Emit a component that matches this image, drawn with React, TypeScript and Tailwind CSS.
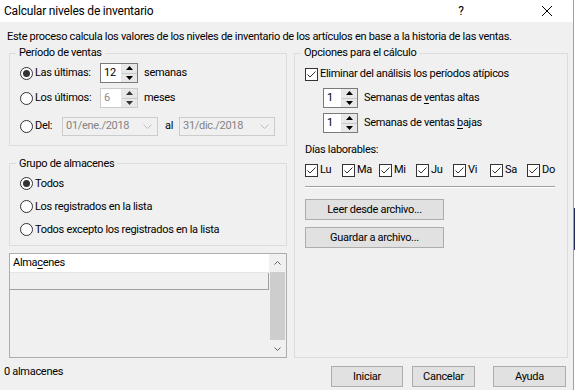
import React from 'react';

function Radio({ checked, label }: { checked?: boolean; label: React.ReactNode }) {
  return (
    <div className="flex items-center h-[16px] whitespace-nowrap">
      <span className="w-[13px] h-[13px] rounded-full border border-[#333333] bg-white flex items-center justify-center shrink-0">
        {checked && <span className="w-[7px] h-[7px] rounded-full bg-[#333333]" />}
      </span>
      <span className="ml-[2px]">{label}</span>
    </div>
  );
}

function Check({ label }: { label: React.ReactNode }) {
  return (
    <div className="flex items-center h-[16px] whitespace-nowrap">
      <span className="w-[13px] h-[13px] border border-[#333333] bg-white flex items-center justify-center shrink-0">
        <svg viewBox="0 0 11 11" className="w-[11px] h-[11px]" fill="none" stroke="#333333" strokeWidth="1">
          <path d="M1.5 5.5 L4 8 L9.5 2.5" />
        </svg>
      </span>
      <span className="ml-[2px]">{label}</span>
    </div>
  );
}

function Spin({ value, disabled, w }: { value: string; disabled?: boolean; w: string }) {
  const border = disabled ? 'border-[#cccccc]' : 'border-[#7a7a7a]';
  const tri = disabled ? '#333333' : '#000000';
  return (
    <div className={`flex h-[20px] border bg-white shrink-0 ${border} ${w}`}>
      <div className={`flex-1 pl-[3px] leading-[18px] ${disabled ? 'text-[#8a8a8a]' : 'text-black'}`}>{value}</div>
      <div className="w-[16px] flex flex-col border-l border-[#e3e3e3] bg-[#f0f0f0]">
        <div className="flex-1 flex items-center justify-center border-b border-[#c8c8c8] bg-[#e8e8e8]">
          <svg viewBox="0 0 7 4" className="w-[7px] h-[4px]"><path d="M3.5 0 L7 4 L0 4 Z" fill={tri} /></svg>
        </div>
        <div className="flex-1 flex items-center justify-center bg-[#e8e8e8]">
          <svg viewBox="0 0 7 4" className="w-[7px] h-[4px]"><path d="M0 0 L7 0 L3.5 4 Z" fill={tri} /></svg>
        </div>
      </div>
    </div>
  );
}

function Combo({ value }: { value: string }) {
  return (
    <div className="flex items-center h-[19px] w-[96px] border border-[#cccccc] bg-[#f0f0f0] text-[#838383] shrink-0">
      <span className="flex-1 pl-[3px]">{value}</span>
      <svg viewBox="0 0 9 5" className="w-[9px] h-[5px] mr-[5px]" fill="none" stroke="#bfbfbf" strokeWidth="1">
        <path d="M0.5 0.5 L4.5 4.5 L8.5 0.5" />
      </svg>
    </div>
  );
}

function Btn({ label, w }: { label: string; w: string }) {
  return (
    <div className={`h-[21px] border border-[#adadad] bg-[#e1e1e1] flex items-center justify-center whitespace-nowrap ${w}`}>
      {label}
    </div>
  );
}

function Group({ title, className, children }: { title: string; className?: string; children: React.ReactNode }) {
  return (
    <fieldset className={`border border-[#dcdcdc] ${className ?? ''}`}>
      <legend className="ml-[6px] px-[3px] leading-[16px]">{title}</legend>
      <div className="pl-[10px]">{children}</div>
    </fieldset>
  );
}

export default function App() {
  return (
    <div className="flex bg-white font-['Roboto',sans-serif] text-[11px] tracking-[-0.3px] text-black leading-[16px] w-[576px] h-[390px] overflow-hidden">
      <div className="w-[574px] h-[390px] flex flex-col border-r border-[#a0a0a0]">
        {/* Title bar */}
        <div className="h-[22px] bg-white flex items-center shrink-0 text-[12px] tracking-[-0.2px]">
          <span className="ml-[4px] flex-1">Calcular niveles de inventario</span>
          <span className="w-[10px] text-center mr-[76px]">?</span>
          <svg viewBox="0 0 10 10" className="w-[10px] h-[10px] mr-[21px]" stroke="#000" strokeWidth="1">
            <path d="M0 0 L10 10 M10 0 L0 10" />
          </svg>
        </div>

        {/* Body */}
        <div className="flex-1 bg-[#f0f0f0] pl-[4px] pt-[7px]">
          <div className="pl-[3px] whitespace-nowrap">Este proceso calcula los valores de los niveles de inventario de los artículos en base a la historia de las ventas.</div>

          <div className="flex ml-[5px] gap-[7px] h-[313px]">
            {/* Left column */}
            <div className="w-[278px] flex flex-col">
              <Group title="Período de ventas" className="h-[101px]">
                <div className="flex items-center h-[20px] mt-[2px]">
                  <div className="w-[80px]"><Radio checked label="Las últimas:" /></div>
                  <Spin value="12" w="w-[38px]" />
                  <span className="ml-[6px]">semanas</span>
                </div>
                <div className="flex items-center h-[20px] mt-[5px]">
                  <div className="w-[80px]"><Radio label="Los últimos:" /></div>
                  <Spin value="6" disabled w="w-[38px]" />
                  <span className="ml-[6px]">meses</span>
                </div>
                <div className="flex items-center h-[20px] mt-[8px]">
                  <div className="w-[42px]"><Radio label="Del:" /></div>
                  <Combo value="01/ene./2018" />
                  <span className="ml-[7px] w-[14px]">al</span>
                  <Combo value="31/dic./2018" />
                </div>
              </Group>

              <Group title="Grupo de almacenes" className="h-[91px] mt-[10px]">
                <div className="mt-[4px]"><Radio checked label="Todos" /></div>
                <div className="mt-[7px]"><Radio label="Los registrados en la lista" /></div>
                <div className="mt-[7px]"><Radio label="Todos excepto los registrados en la lista" /></div>
              </Group>

              <div className="mt-[7px] h-[105px] border border-[#adadad] bg-[#f0f0f0] flex">
                <div className="flex-1 flex flex-col">
                  <div className="h-[19px] bg-white pl-[3px] leading-[18px] border-b border-[#e5e5e5]">
                    Alma<span className="underline underline-offset-2">c</span>enes
                  </div>
                  <div className="h-[17px] border-b border-r border-[#a0a0a0] bg-[#f0f0f0]" />
                </div>
                <div className="w-[17px] flex flex-col bg-[#f0f0f0]">
                  <div className="h-[18px] flex items-center justify-center">
                    <svg viewBox="0 0 7 4" className="w-[7px] h-[4px]" fill="none" stroke="#606060" strokeWidth="1">
                      <path d="M0.5 3.5 L3.5 0.5 L6.5 3.5" />
                    </svg>
                  </div>
                  <div className="h-[68px] mx-[1px] bg-[#cdcdcd]" />
                  <div className="flex-1 flex items-center justify-center">
                    <svg viewBox="0 0 7 4" className="w-[7px] h-[4px]" fill="none" stroke="#606060" strokeWidth="1">
                      <path d="M0.5 0.5 L3.5 3.5 L6.5 0.5" />
                    </svg>
                  </div>
                </div>
              </div>
            </div>

            {/* Right column */}
            <Group title="Opciones para el cálculo" className="w-[274px] h-[313px]">
              <div className="mt-[5px]">
                <Check label="Eliminar del análisis los períodos atípicos" />
              </div>
              <div className="flex items-center mt-[6px] ml-[18px]">
                <Spin value="1" w="w-[35px]" />
                <span className="ml-[6px]">Semanas de <span className="underline underline-offset-2">v</span>entas altas</span>
              </div>
              <div className="flex items-center mt-[5px] ml-[18px]">
                <Spin value="1" w="w-[35px]" />
                <span className="ml-[6px]">Semanas de ventas <span className="underline underline-offset-2">b</span>ajas</span>
              </div>
              <div className="mt-[9px]">Días laborables:</div>
              <div className="flex mt-[4px]">
                {['Lu', 'Ma', 'Mi', 'Ju', 'Vi', 'Sa', 'Do'].map(d => (
                  <div key={d} className="w-[37px]"><Check label={d} /></div>
                ))}
              </div>
              <div className="mt-[8px] mr-[12px] h-[2px] border-t border-[#a0a0a0] border-b border-b-white" />
              <div className="mt-[11px]"><Btn label="Leer desde archivo..." w="w-[139px]" /></div>
              <div className="mt-[7px]"><Btn label="Guardar a archivo..." w="w-[139px]" /></div>
            </Group>
          </div>

          {/* Bottom row */}
          <div className="flex">
            <div className="mt-[6px] flex-1">0 almacenes</div>
            <div className="flex mt-[8px] mr-[7px]">
              <Btn label="Iniciar" w="w-[72px]" />
              <div className="ml-[9px]"><Btn label="Cancelar" w="w-[63px]" /></div>
              <div className="ml-[18px]"><Btn label="Ayuda" w="w-[73px]" /></div>
            </div>
          </div>
        </div>
      </div>
      <div className="w-[1px] bg-white flex flex-col">
        <div className="mt-[208px] h-[42px] bg-[#1f2a5c]" />
      </div>
    </div>
  );
}
